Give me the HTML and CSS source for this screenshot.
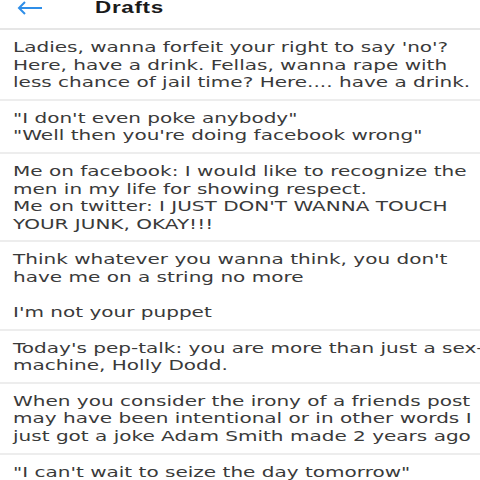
FILE: index.html
```html
<!DOCTYPE html>
<html>
<head>
<meta charset="utf-8">
<link rel="stylesheet" href="styles.css">
</head>
<body>
<div class="header">
  <svg class="back" width="26" height="14" viewBox="0 0 26 14"><path d="M25 7H2M8 1L2 7l6 6" fill="none" stroke="#2f8ee8" stroke-width="2"/></svg>
  <span class="title">Drafts</span>
</div>
<div class="list">
  <div class="item"><span class="t">Ladies, wanna forfeit your right to say 'no'?<br>Here, have a drink. Fellas, wanna rape with<br>less chance of jail time? Here.... have a drink.</span></div>
  <div class="item"><span class="t">"I don't even poke anybody"<br>"Well then you're doing facebook wrong"</span></div>
  <div class="item"><span class="t">Me on facebook: I would like to recognize the<br>men in my life for showing respect.<br>Me on twitter: I JUST DON'T WANNA TOUCH<br>YOUR JUNK, OKAY!!!</span></div>
  <div class="item"><span class="t">Think whatever you wanna think, you don't<br>have me on a string no more<br><br>I'm not your puppet</span></div>
  <div class="item"><span class="t">Today's pep-talk: you are more than just a sex-<br>machine, Holly Dodd.</span></div>
  <div class="item"><span class="t">When you consider the irony of a friends post<br>may have been intentional or in other words I<br>just got a joke Adam Smith made 2 years ago</span></div>
  <div class="item"><span class="t">"I can't wait to seize the day tomorrow"</span></div>
</div>
</body>
</html>
```
FILE: styles.css
```css
html, body {
  margin: 0;
  padding: 0;
  background: #ffffff;
}
body {
  width: 480px;
  height: 480px;
  overflow: hidden;
  font-family: "DejaVu Sans", sans-serif;
  color: #3a3a3a;
}
.header {
  height: 28px;
  border-bottom: 2px solid #e6e6e6;
  display: flex;
  align-items: flex-start;
  padding-left: 17px;
  box-sizing: content-box;
}
.back {
  margin-top: 1px;
}
.title {
  margin-left: 52px;
  font-family: "Liberation Sans", sans-serif;
  font-weight: bold;
  font-size: 16px;
  line-height: 18px;
  margin-top: -1px;
  color: #1a1a1a;
  letter-spacing: 0.5px;
  display: inline-block;
  transform: scaleX(1.4);
  transform-origin: left center;
}
.item {
  padding: 9px 0 7.3px 13px;
  font-size: 14px;
  line-height: 17.5px;
  border-bottom: 2px solid #ededed;
  white-space: nowrap;
}
.t {
  display: inline-block;
  transform: scaleX(1.43);
  transform-origin: left top;
}
```
